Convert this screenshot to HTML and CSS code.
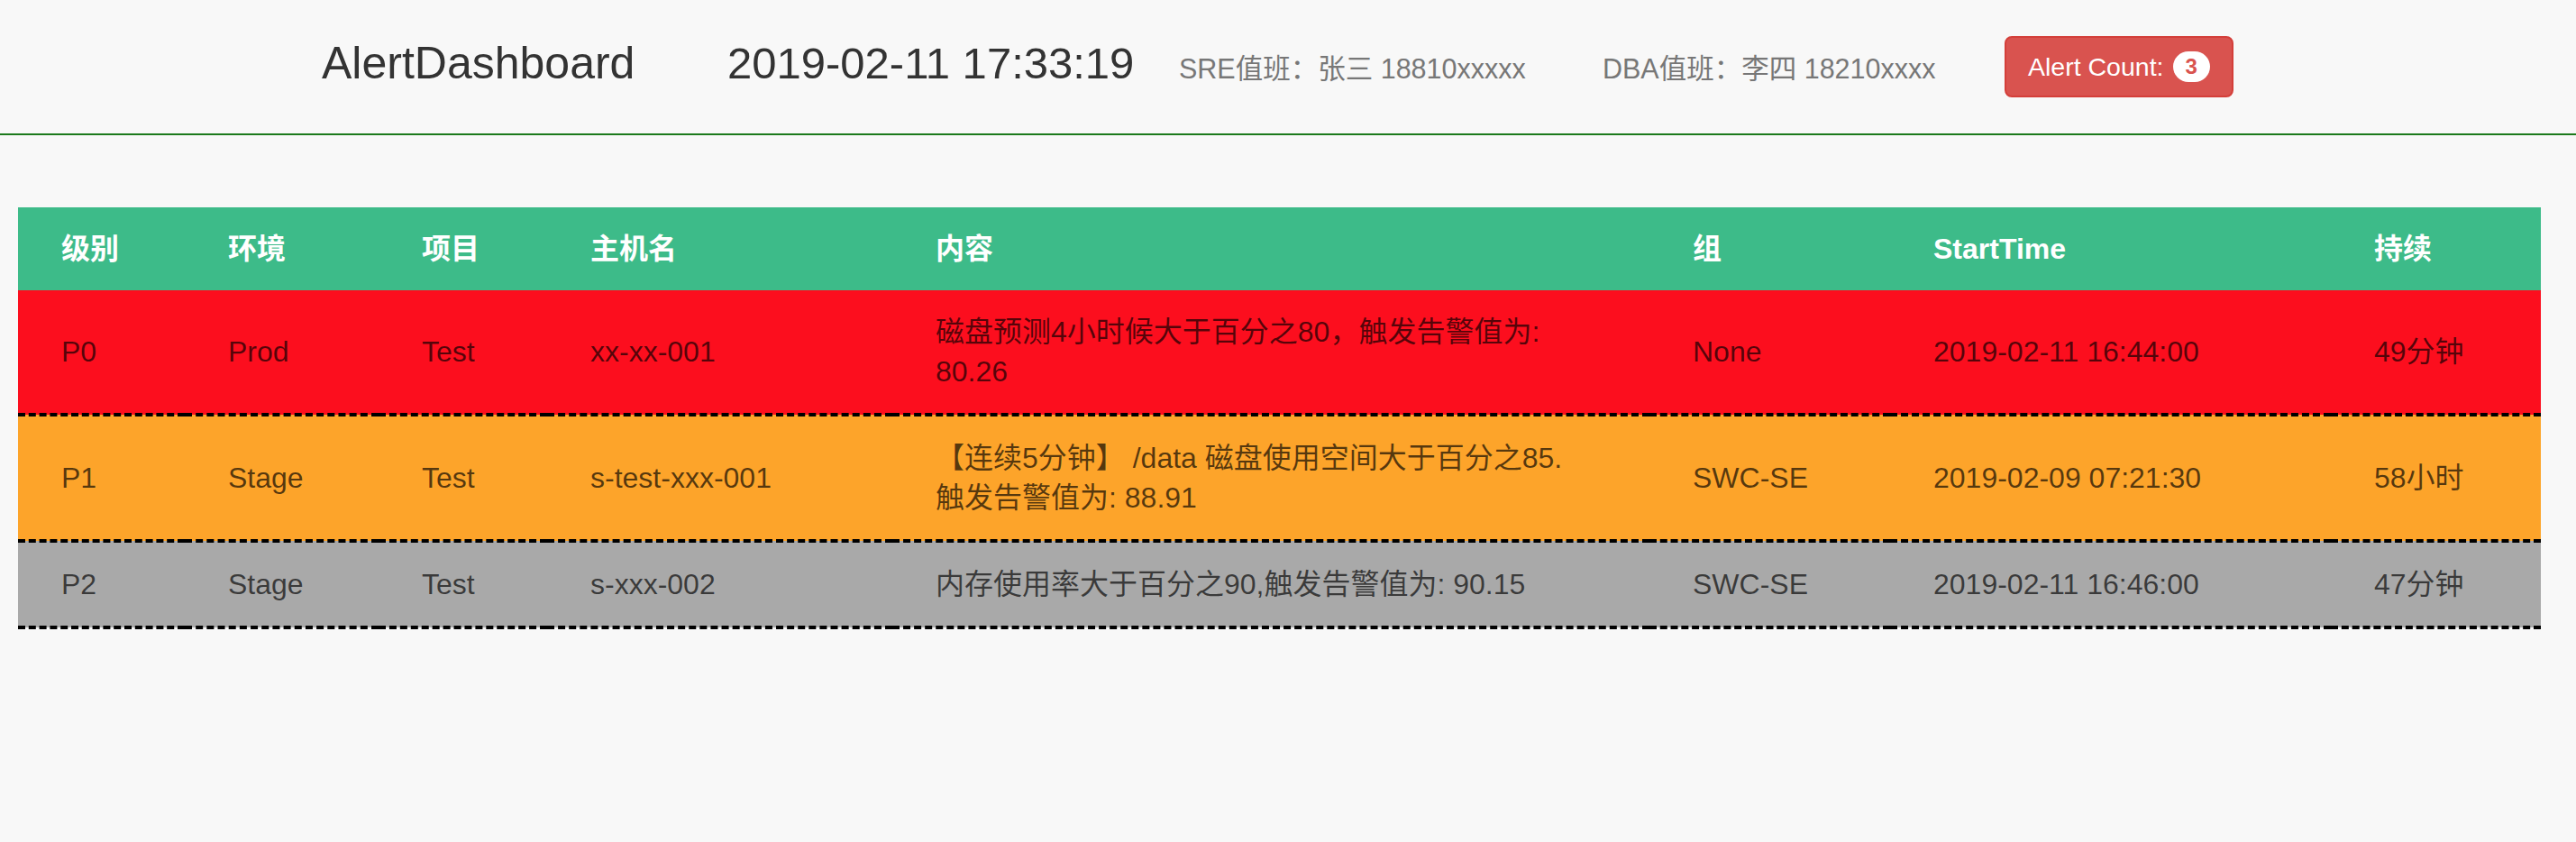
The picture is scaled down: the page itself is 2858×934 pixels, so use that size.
FILE: index.html
```html
<!DOCTYPE html>
<html lang="zh-CN">
<head>
<meta charset="utf-8">
<title>AlertDashboard</title>
<link rel="stylesheet" href="styles.css">
</head>
<body>
<header class="topbar">
  <div class="brand">AlertDashboard</div>
  <div class="clock">2019-02-11 17:33:19</div>
  <div class="duty duty-sre">SRE值班：张三 18810xxxxx</div>
  <div class="duty duty-dba">DBA值班：李四 18210xxxx</div>
  <button class="alert-btn" type="button">Alert Count:<span class="badge">3</span></button>
</header>
<main class="content">
  <table class="alerts">
    <colgroup>
      <col class="c-level">
      <col class="c-env">
      <col class="c-proj">
      <col class="c-host">
      <col class="c-msg">
      <col class="c-group">
      <col class="c-start">
      <col class="c-dur">
    </colgroup>
    <thead>
      <tr>
        <th>级别</th>
        <th>环境</th>
        <th>项目</th>
        <th>主机名</th>
        <th>内容</th>
        <th>组</th>
        <th>StartTime</th>
        <th>持续</th>
      </tr>
    </thead>
    <tbody>
      <tr class="p0">
        <td>P0</td>
        <td>Prod</td>
        <td>Test</td>
        <td>xx-xx-001</td>
        <td class="msg">磁盘预测4小时候大于百分之80，触发告警值为: 80.26</td>
        <td>None</td>
        <td>2019-02-11 16:44:00</td>
        <td>49分钟</td>
      </tr>
      <tr class="p1">
        <td>P1</td>
        <td>Stage</td>
        <td>Test</td>
        <td>s-test-xxx-001</td>
        <td class="msg">【连续5分钟】 /data 磁盘使用空间大于百分之85. 触发告警值为: 88.91</td>
        <td>SWC-SE</td>
        <td>2019-02-09 07:21:30</td>
        <td>58小时</td>
      </tr>
      <tr class="p2">
        <td>P2</td>
        <td>Stage</td>
        <td>Test</td>
        <td>s-xxx-002</td>
        <td class="msg">内存使用率大于百分之90,触发告警值为: 90.15</td>
        <td>SWC-SE</td>
        <td>2019-02-11 16:46:00</td>
        <td>47分钟</td>
      </tr>
    </tbody>
  </table>
</main>
</body>
</html>
```
FILE: styles.css
```css
html, body {
  margin: 0;
  padding: 0;
  background: #f8f8f8;
}

body {
  font-family: "Liberation Sans", "Noto Sans CJK SC", sans-serif;
  color: #333;
}

.topbar {
  display: flex;
  align-items: center;
  height: 148px;
  padding-left: 357px;
  border-bottom: 2px solid #1c7a1c;
  box-sizing: content-box;
}

.brand {
  width: 450px;
  flex: none;
  font-size: 50px;
  line-height: 50px;
  color: #333;
  margin-bottom: 9px;
}

.clock {
  width: 501px;
  flex: none;
  font-size: 49px;
  line-height: 50px;
  color: #333;
  margin-bottom: 9px;
}

.duty {
  flex: none;
  font-size: 30.5px;
  line-height: 40px;
  color: #777;
  margin-top: 3px;
}

.duty-sre {
  width: 470px;
}

.duty-dba {
  width: 446px;
}

.alert-btn {
  flex: none;
  display: inline-flex;
  align-items: center;
  font-family: "Liberation Sans", "Noto Sans CJK SC", sans-serif;
  font-size: 28.5px;
  line-height: 40px;
  padding: 12px 24px;
  color: #fff;
  background: #d9534f;
  border: 2px solid #d43f3a;
  border-radius: 8px;
}

.badge {
  display: inline-block;
  margin-left: 10px;
  padding: 5px 14px;
  font-size: 24px;
  line-height: 24px;
  font-weight: bold;
  color: #d9534f;
  background: #fff;
  border-radius: 20px;
}

.content {
  padding: 80px 0 0 20px;
}

.alerts {
  width: 2799px;
  table-layout: fixed;
  border-collapse: collapse;
  border-spacing: 0;
  font-size: 32px;
  line-height: 44px;
}

.c-level { width: 185px; }
.c-env { width: 215px; }
.c-proj { width: 187px; }
.c-host { width: 383px; }
.c-msg { width: 840px; }
.c-group { width: 267px; }
.c-start { width: 489px; }
.c-dur { width: 233px; }

.alerts th {
  background: #3dbb89;
  color: #fff;
  font-weight: bold;
  text-align: left;
  padding: 24px 48px;
}

.alerts td {
  padding: 24px 48px;
  vertical-align: middle;
  color: rgba(0, 0, 0, 0.66);
  border-bottom: 4px dashed #000;
}

.alerts td.msg {
  padding-right: 80px;
}

.p0 td { background: #fc0e1e; }
.p1 td { background: #fda42a; }
.p2 td { background: #a9a9a9; }
```
